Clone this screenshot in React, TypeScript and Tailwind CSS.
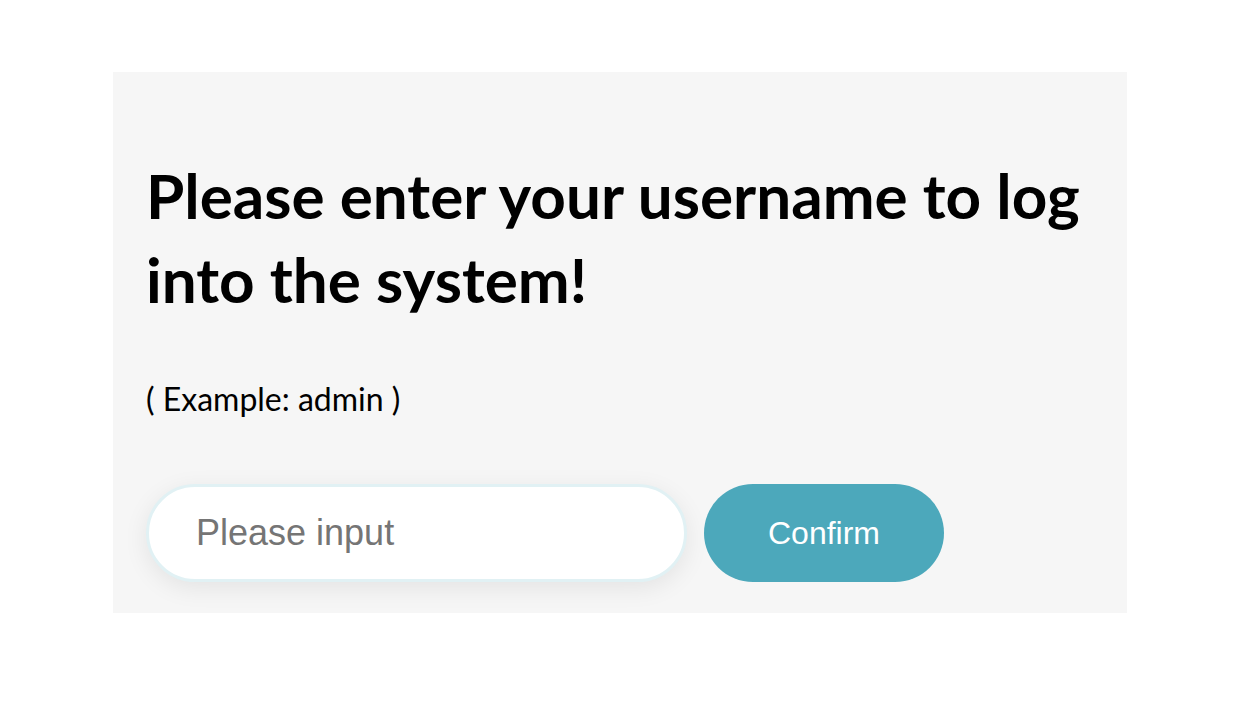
export default function App() {
  return (
    <div className="min-h-screen bg-white pt-[72px] pl-[113px]">
      <div className="w-[1014px] h-[541px] bg-[#f6f6f6] px-[33px] pt-[81px] font-['Lato',sans-serif]">
        <h1 className="text-[62px] leading-[84px] font-bold text-black">
          Please enter your username to log
          <br />
          into the system!
        </h1>
        <p className="mt-[60px] text-[32px] leading-[36px] text-black">( Example: admin )</p>
        <div className="mt-[67px] flex items-center gap-[17px] font-['Liberation_Sans',Arial,sans-serif]">
          <input
            type="text"
            placeholder="Please input"
            className="w-[541px] h-[98px] rounded-full bg-white border-[3px] border-[#e1f1f4] pl-[47px] text-[36px] text-black placeholder:text-[#757575] outline-none shadow-[0_6px_24px_rgba(0,0,0,0.08)]"
          />
          <button className="w-[240px] h-[98px] rounded-full bg-[#4ca8bb] text-white text-[32px]">
            Confirm
          </button>
        </div>
      </div>
    </div>
  )
}
